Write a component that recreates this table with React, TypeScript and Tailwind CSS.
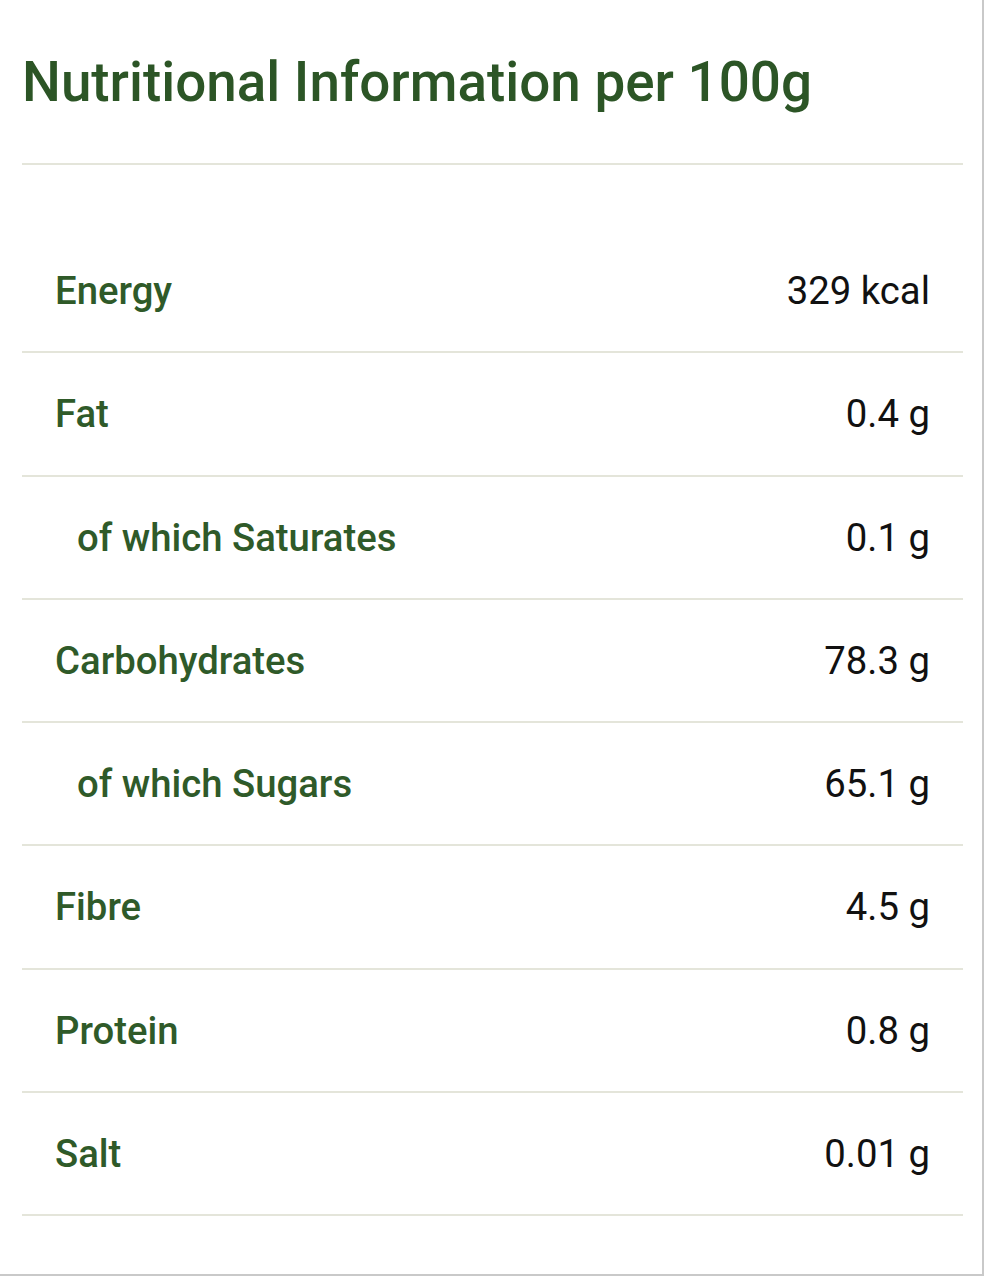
const ROWS = [
  { label: "Energy", value: "329 kcal" },
  { label: "Fat", value: "0.4 g" },
  { label: "of which Saturates", value: "0.1 g", sub: true },
  { label: "Carbohydrates", value: "78.3 g" },
  { label: "of which Sugars", value: "65.1 g", sub: true },
  { label: "Fibre", value: "4.5 g" },
  { label: "Protein", value: "0.8 g" },
  { label: "Salt", value: "0.01 g" },
];

export default function App() {
  return (
    <div className="h-[1276px] w-[984px] border-r-2 border-b-2 border-[#c9c9c9] bg-white">
      <div className="pl-[22px] pr-[19px]">
        <h1 className="pt-[48px] pb-[47px] font-['Roboto',sans-serif] text-[54.8px] font-medium leading-[68px] text-[#2c5526]">
          Nutritional Information per 100g
        </h1>
        <div className="h-[2px] bg-[#e4e5da]" />
        <div className="mt-[65px] font-['Roboto',sans-serif]">
          {ROWS.map((r) => (
            <div
              key={r.label}
              className="flex h-[123.3px] items-center justify-between border-b-2 border-[#e4e5da] pr-[33px]"
            >
              <span
                className={
                  (r.sub ? "pl-[55px]" : "pl-[33px]") +
                  " text-[38.3px] font-medium text-[#2f5a29]"
                }
              >
                {r.label}
              </span>
              <span className="text-[38.3px] text-[#111]">{r.value}</span>
            </div>
          ))}
        </div>
      </div>
    </div>
  );
}
